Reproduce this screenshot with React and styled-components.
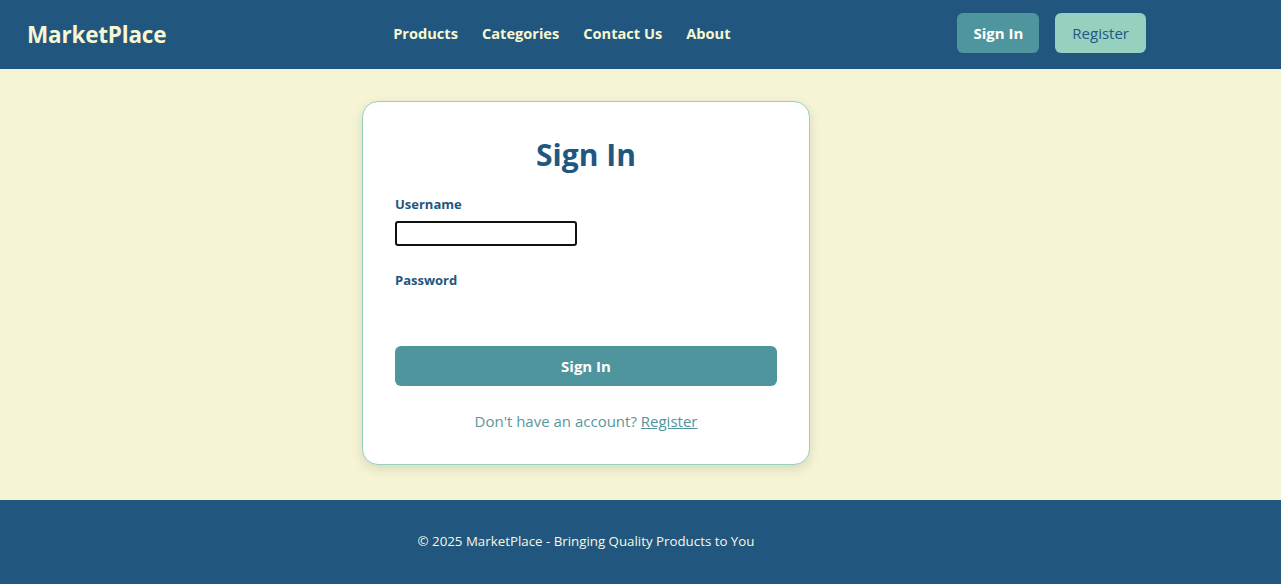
import styled, { createGlobalStyle } from 'styled-components';

const GlobalStyle = createGlobalStyle`
  html, body {
    margin: 0;
    padding: 0;
    background: #f5f5d5;
    font-family: "Open Sans", "Noto Sans", sans-serif;
  }
  * {
    box-sizing: border-box;
  }
`;

const Page = styled.div`
  display: flex;
  flex-direction: column;
  min-height: 584px;
`;

const Header = styled.header`
  background: #21577f;
  height: 69px;
`;

const HeaderInner = styled.div`
  width: 1172px;
  height: 100%;
  padding: 0 26px 4px 27px;
  display: flex;
  align-items: center;
  justify-content: space-between;
`;

const Logo = styled.div`
  color: #f7f7d4;
  font-size: 22.5px;
  font-weight: 700;
  letter-spacing: -0.2px;
  margin-top: 4px;
`;

const Nav = styled.nav`
  display: flex;
  gap: 24px;
`;

const NavLink = styled.a`
  color: #f7f7d4;
  font-size: 14.6px;
  font-weight: 700;
  text-decoration: none;
`;

const Actions = styled.div`
  display: flex;
  gap: 16px;
`;

const HeaderButton = styled.button`
  height: 40px;
  padding: 0 ${({ $primary }) => ($primary ? '16px' : '17px')};
  border: none;
  border-radius: 6px;
  font-family: inherit;
  font-size: 15px;
  font-weight: ${({ $primary }) => ($primary ? 700 : 500)};
  background: ${({ $primary }) => ($primary ? '#4f959d' : '#96d1bf')};
  color: ${({ $primary }) => ($primary ? '#ffffff' : '#21577f')};
`;

const Main = styled.main`
  flex: 1;
  padding: 32px 0 33px;
`;

const MainInner = styled.div`
  width: 1172px;
  display: flex;
  justify-content: center;
`;

const Card = styled.div`
  width: 448px;
  background: #ffffff;
  border: 1px solid #96d1bf;
  border-radius: 16px;
  padding: 32px;
  box-shadow: 0 4px 12px rgba(0, 0, 0, 0.12);
`;

const Title = styled.h1`
  margin: 0 0 19px;
  text-align: center;
  color: #21577f;
  font-size: 30px;
  line-height: 42px;
  font-weight: 700;
`;

const Field = styled.div`
  margin-bottom: 25px;
`;

const Label = styled.label`
  display: block;
  color: #21577f;
  font-size: 13px;
  line-height: 19px;
  font-weight: 700;
  margin-bottom: 7px;
`;

const Input = styled.input`
  display: block;
  width: 182px;
  height: 25px;
  padding: 0 4px;
  background: #ffffff;
  border: ${({ $focused }) => ($focused ? '2px solid #111111' : 'none')};
  border-radius: 3px;
  font-family: inherit;
  font-size: 14px;
  outline: none;
`;

const SubmitButton = styled.button`
  display: block;
  width: 100%;
  height: 40px;
  margin-top: -1px;
  border: none;
  border-radius: 6px;
  background: #4f959d;
  color: #ffffff;
  font-family: inherit;
  font-size: 15px;
  font-weight: 700;
`;

const SwitchText = styled.p`
  margin: 24px 0 0;
  text-align: center;
  color: #5a969c;
  font-size: 15px;
  line-height: 22px;
`;

const SwitchLink = styled.a`
  color: #4f959d;
  text-decoration: underline;
`;

const Footer = styled.footer`
  background: #21577f;
  height: 84px;
`;

const FooterInner = styled.div`
  width: 1172px;
  height: 100%;
  display: flex;
  align-items: center;
  justify-content: center;
  color: #f7f7e4;
  font-size: 13.3px;
  padding-bottom: 2px;
`;

export default function App() {
  return (
    <>
      <GlobalStyle />
      <Page>
        <Header>
          <HeaderInner>
            <Logo>MarketPlace</Logo>
            <Nav>
              <NavLink href="#">Products</NavLink>
              <NavLink href="#">Categories</NavLink>
              <NavLink href="#">Contact Us</NavLink>
              <NavLink href="#">About</NavLink>
            </Nav>
            <Actions>
              <HeaderButton $primary>Sign In</HeaderButton>
              <HeaderButton>Register</HeaderButton>
            </Actions>
          </HeaderInner>
        </Header>
        <Main>
          <MainInner>
            <Card>
              <Title>Sign In</Title>
              <Field>
                <Label>Username</Label>
                <Input type="text" $focused />
              </Field>
              <Field>
                <Label>Password</Label>
                <Input type="password" />
              </Field>
              <SubmitButton>Sign In</SubmitButton>
              <SwitchText>
                Don't have an account? <SwitchLink href="#">Register</SwitchLink>
              </SwitchText>
            </Card>
          </MainInner>
        </Main>
        <Footer>
          <FooterInner>© 2025 MarketPlace - Bringing Quality Products to You</FooterInner>
        </Footer>
      </Page>
    </>
  );
}
